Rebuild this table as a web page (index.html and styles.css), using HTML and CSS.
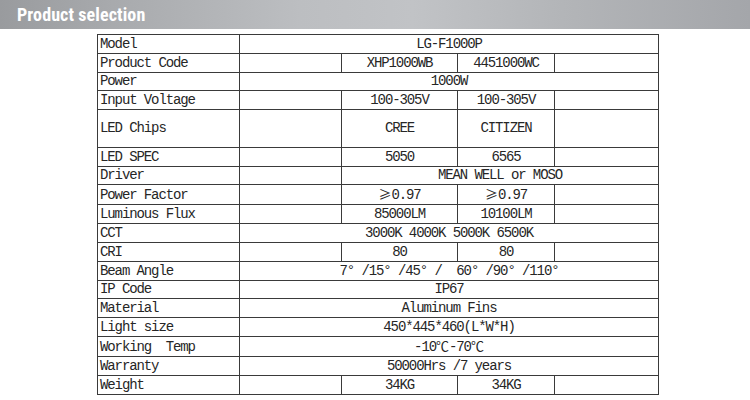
FILE: index.html
```html
<!DOCTYPE html>
<html lang="en">
<head>
<meta charset="utf-8">
<link rel="stylesheet" href="styles.css">
</head>
<body>
<div class="banner"><span class="banner-title">Product selection</span></div>
<div class="wrap">
<table class="spec">
<colgroup>
<col class="c1"><col class="c2"><col class="c3"><col class="c4"><col class="c5">
</colgroup>
<tbody>
<tr><td class="lbl">Model</td><td class="mid" colspan="4">LG-F1000P</td></tr>
<tr><td class="lbl">Product Code</td><td></td><td class="mid">XHP1000WB</td><td class="mid">4451000WC</td><td></td></tr>
<tr><td class="lbl">Power</td><td class="mid" colspan="4">1000W</td></tr>
<tr><td class="lbl">Input Voltage</td><td></td><td class="mid">100-305V</td><td class="mid">100-305V</td><td></td></tr>
<tr class="tall"><td class="lbl">LED Chips</td><td></td><td class="mid">CREE</td><td class="mid">CITIZEN</td><td></td></tr>
<tr><td class="lbl">LED SPEC</td><td></td><td class="mid">5050</td><td class="mid">6565</td><td></td></tr>
<tr><td class="lbl">Driver</td><td></td><td class="mid" colspan="3">MEAN WELL or MOSO</td></tr>
<tr><td class="lbl">Power Factor</td><td></td><td class="mid"><span class="cjk" lang="zh-CN">≥</span>0.97</td><td class="mid"><span class="cjk" lang="zh-CN">≥</span>0.97</td><td></td></tr>
<tr><td class="lbl">Luminous Flux</td><td></td><td class="mid">85000LM</td><td class="mid">10100LM</td><td></td></tr>
<tr><td class="lbl">CCT</td><td class="mid" colspan="4">3000K 4000K 5000K 6500K</td></tr>
<tr><td class="lbl">CRI</td><td></td><td class="mid">80</td><td class="mid">80</td><td></td></tr>
<tr><td class="lbl">Beam Angle</td><td class="mid pre" colspan="4">7° /15° /45° /  60° /90° /110°</td></tr>
<tr><td class="lbl">IP Code</td><td class="mid" colspan="4">IP67</td></tr>
<tr><td class="lbl">Material</td><td class="mid" colspan="4">Aluminum Fins</td></tr>
<tr><td class="lbl">Light size</td><td class="mid" colspan="4">450*445*460(L*W*H)</td></tr>
<tr><td class="lbl pre">Working  Temp</td><td class="mid" colspan="4">-10<span class="cjk" lang="zh-CN">℃</span>-70<span class="cjk" lang="zh-CN">℃</span></td></tr>
<tr><td class="lbl">Warranty</td><td class="mid" colspan="4">50000Hrs /7 years</td></tr>
<tr><td class="lbl">Weight</td><td></td><td class="mid">34KG</td><td class="mid">34KG</td><td></td></tr>
</tbody>
</table>
</div>
</body>
</html>
```
FILE: styles.css
```css
html, body {
  margin: 0;
  padding: 0;
  background: #ffffff;
}
.banner {
  height: 29px;
  width: 750px;
  background: linear-gradient(to right, #999b9e 0%, #a8aaad 15%, #bcbec1 40%, #c1c3c6 55%, #b3b5b8 75%, #a4a6aa 100%);
  display: flex;
  align-items: center;
  padding-left: 17px;
  box-sizing: border-box;
}
.banner-title {
  font-family: "Liberation Sans Narrow", "Roboto Condensed", "Liberation Sans", sans-serif;
  font-weight: bold;
  font-size: 18px;
  color: #ffffff;
  letter-spacing: 0.1px;
}
.wrap {
  padding-top: 5px;
  padding-left: 97px;
}
.spec {
  border-collapse: collapse;
  table-layout: fixed;
  width: 561px;
  font-family: "Liberation Mono", "Noto Sans CJK SC", monospace;
  font-size: 14px;
  letter-spacing: -1.1px;
  color: #262626;
}
.c1 { width: 142px; }
.c2 { width: 102px; }
.c3 { width: 116px; }
.c4 { width: 97px; }
.c5 { width: 104px; }
.spec tr {
  height: 18.8px;
}
.spec tr.tall {
  height: 37.6px;
}
.spec td {
  border: 1px solid #3a3a3a;
  padding: 0 0 0 2px;
  line-height: 17px;
  white-space: nowrap;
  overflow: hidden;
  vertical-align: bottom;
}
.spec tr.tall td {
  vertical-align: middle;
}
.spec td.mid {
  text-align: center;
  padding: 0;
}
.pre {
  white-space: pre !important;
}
.cjk {
  font-family: "Noto Sans CJK SC", sans-serif;
  letter-spacing: 0;
  font-size: 13px;
}
```
